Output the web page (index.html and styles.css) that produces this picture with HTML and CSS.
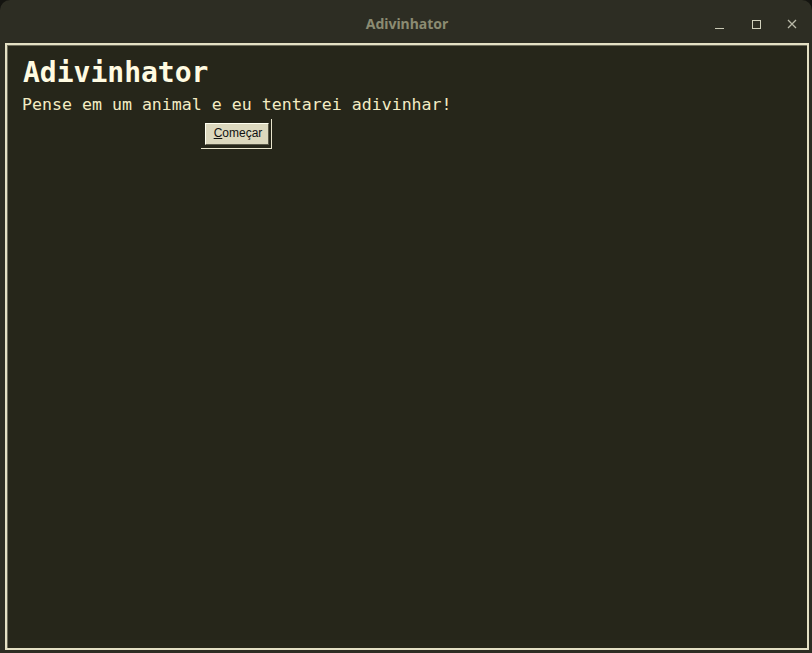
FILE: index.html
```html
<!DOCTYPE html>
<html>
<head>
<meta charset="utf-8">
<link rel="stylesheet" href="styles.css">
</head>
<body>
<div class="window">
  <div class="titlebar">
    <span class="title">Adivinhator</span>
    <div class="controls">
      <span class="ctl min"></span>
      <span class="ctl max"></span>
      <svg class="ctl close" width="10" height="10" viewBox="0 0 10 10"><path d="M1 1 L9 9 M9 1 L1 9" stroke="#b9b9a8" stroke-width="1.3"/></svg>
    </div>
  </div>
  <div class="content">
    <h1 class="heading">Adivinhator</h1>
    <p class="lead">Pense em um animal e eu tentarei adivinhar!</p>
    <div class="btnframe">
      <button class="btn"><u>C</u>omeçar</button>
    </div>
  </div>
</div>
</body>
</html>
```
FILE: styles.css
```css
html, body {
  margin: 0;
  padding: 0;
  background: #141410;
  width: 812px;
  height: 653px;
  overflow: hidden;
}
.window {
  width: 812px;
  height: 653px;
  box-sizing: border-box;
  background: #2d2d23;
  border-radius: 10px 10px 0 0;
  display: flex;
  flex-direction: column;
}
.titlebar {
  height: 43px;
  flex: none;
  display: flex;
  align-items: center;
  justify-content: center;
  position: relative;
}
.title {
  font-family: "Noto Sans", "DejaVu Sans", sans-serif;
  font-weight: bold;
  font-size: 14px;
  color: #8b8b72;
  margin-left: 2px;
  margin-top: 3px;
}
.controls {
  position: absolute;
  right: 15px;
  top: 19px;
  display: flex;
  align-items: center;
  gap: 23px;
}
.ctl { display: block; }
.min {
  width: 9px;
  height: 1px;
  background: #c9c9b4;
  margin-top: 8px;
  margin-right: 1px;
}
.max {
  width: 7px;
  height: 7px;
  border: 1px solid #d0d0bc;
  margin-left: 4px;
}
.close { margin-left: 3px; }
.content {
  flex: 1;
  margin: 0 3px 3px 5px;
  border: 2px solid #e4e0c4;
  box-shadow: inset 1px 1px 0 #6f6d5c;
  background: #26261a;
  padding: 11px 14px 0 15px;
}
.heading {
  margin: 0 0 6px 1px;
  font-family: "DejaVu Sans Mono", monospace;
  font-weight: bold;
  font-size: 28px;
  line-height: 33px;
  color: #fffbe2;
}
.lead {
  margin: 0;
  font-family: "DejaVu Sans Mono", monospace;
  font-size: 16.6px;
  line-height: 20px;
  color: #f3ecc4;
}
.btnframe {
  margin: 4px 0 0 179px;
  width: 68px;
  height: 29px;
  border-right: 1px solid #e8e4cc;
  border-bottom: 1px solid #e8e4cc;
  display: flex;
  align-items: center;
  justify-content: flex-end;
  padding-right: 2px;
}
.btn {
  font-family: "Liberation Sans", Arial, sans-serif;
  font-size: 12px;
  color: #111;
  background: #dcd8be;
  border: 1px solid;
  border-color: #fffff0 #5a5848 #5a5848 #fffff0;
  padding: 2px 4px 3px 6px;
  height: 22px;
  width: 64px;
  line-height: 14px;
  margin-top: 0;
}
```
